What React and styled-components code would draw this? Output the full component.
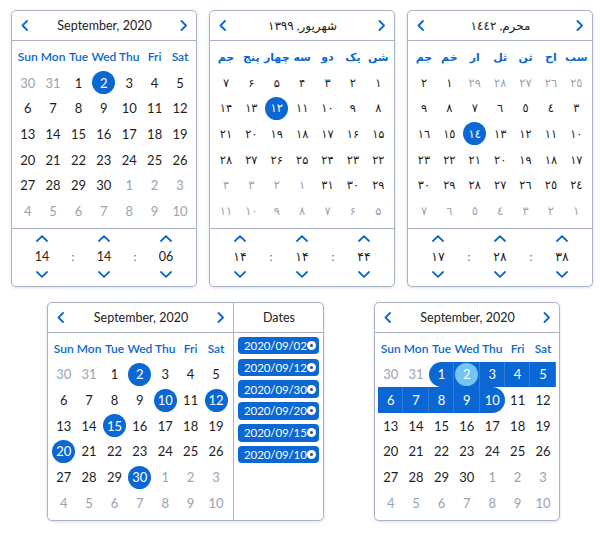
import React from 'react';
import styled, {createGlobalStyle} from 'styled-components';

const BLUE = '#0b67d3';
const FONT = 'Lato, "DejaVu Sans", sans-serif';

const GlobalStyle = createGlobalStyle`
  html, body {
    margin: 0;
    background: #fff;
  }
  body {
    font-family: ${FONT};
    color: #1e1e1e;
  }
`;

const fa = (n) => String(n).replace(/\d/g, (d) => '۰۱۲۳۴۵۶۷۸۹'[d]);
const ar = (n) => String(n).replace(/\d/g, (d) => '٠١٢٣٤٥٦٧٨٩'[d]);

// builds a month grid from [from, to, muted] runs
const build = (runs, fmt = String) => {
  const cells = [];
  runs.forEach(([from, to, muted]) => {
    for (let d = from; d <= to; d++) cells.push({n: d, label: fmt(d), muted: !!muted});
  });
  return cells;
};

const gregorian = build([[30, 31, true], [1, 30], [1, 10, true]]);
const persian = build([[1, 31], [1, 11, true]], fa);
const hijri = build([[25, 29, true], [1, 30], [1, 7, true]], ar);

const EN_DAYS = ['Sun', 'Mon', 'Tue', 'Wed', 'Thu', 'Fri', 'Sat'];
const FA_DAYS = ['شن', 'یک', 'دو', 'سه', 'چهار', 'پنج', 'جم'];
const AR_DAYS = ['سب', 'اح', 'ثن', 'ثل', 'ار', 'خم', 'جم'];

const Chevron = ({dir}) => {
  const d = {
    left: 'M6 1 L1.5 5.5 L6 10',
    right: 'M1.5 1 L6 5.5 L1.5 10',
  }[dir];
  return (
    <svg width="8" height="11" viewBox="0 0 8 11">
      <path d={d} fill="none" stroke={BLUE} strokeWidth="1.8" strokeLinecap="round" strokeLinejoin="round" />
    </svg>
  );
};

const Caret = ({up}) => (
  <svg width="12" height="7" viewBox="0 0 12 7">
    <path
      d={up ? 'M1 6 L6 1.2 L11 6' : 'M1 1 L6 5.8 L11 1'}
      fill="none"
      stroke={BLUE}
      strokeWidth="1.8"
      strokeLinecap="round"
      strokeLinejoin="round"
    />
  </svg>
);

const Page = styled.div`
  width: 600px;
  height: 535px;
  padding-top: 10px;
  box-sizing: border-box;
  display: flex;
  flex-direction: column;
  gap: 15px;
`;

const Row = styled.div`
  display: flex;
  align-items: flex-start;
  gap: ${(p) => p.$gap}px;
  padding-left: ${(p) => p.$left}px;
`;

const Panel = styled.div`
  display: flex;
  background: #fff;
  border: 1px solid #a9b5c7;
  border-radius: 5px;
  box-shadow: 0 1px 3px rgba(60, 80, 110, 0.18);
  overflow: hidden;
`;

const Column = styled.div`
  display: flex;
  flex-direction: column;
  width: ${(p) => p.$width}px;
  border-right: ${(p) => (p.$divided ? '1px solid #a9b5c7' : 'none')};
`;

const Header = styled.div`
  height: 29px;
  display: flex;
  align-items: center;
  justify-content: ${(p) => (p.$center ? 'center' : 'space-between')};
  padding: 0 8px 0 9px;
  border-bottom: 1px solid #a9b5c7;
  font-size: 12.5px;
  color: #222;
`;

const Title = styled.span`
  unicode-bidi: plaintext;
  font-size: ${(p) => (p.$rtl ? '12px' : '12.5px')};
`;

const Grid = styled.div`
  display: grid;
  grid-template-columns: repeat(7, 25.4px);
  grid-auto-rows: 25.7px;
  padding: 3px ${(p) => p.$right}px 4px 3px;
  font-size: ${(p) => (p.dir === 'rtl' ? '11.5px' : '13px')};
`;

const WeekDay = styled.div`
  display: flex;
  align-items: center;
  justify-content: center;
  color: ${BLUE};
  font-weight: 600;
  font-size: ${(p) => (p.$rtl ? '11px' : '12px')};
  white-space: nowrap;
`;

const Cell = styled.div`
  display: flex;
  align-items: center;
  justify-content: center;
  color: ${(p) => (p.$range ? '#fff' : p.$muted ? '#98a4b3' : '#1e1e1e')};
  background: ${(p) => (p.$range ? BLUE : 'transparent')};
  border-radius: ${(p) =>
    p.$range === 'start' ? '13px 0 0 13px' : p.$range === 'end' ? '0 13px 13px 0' : '0'};
  box-shadow: ${(p) =>
    p.$range && p.$range !== 'end' ? 'inset -1px 0 0 rgba(255,255,255,0.16)' : 'none'};
`;

const Mark = styled.span`
  width: 23px;
  height: 23px;
  border-radius: 50%;
  display: flex;
  align-items: center;
  justify-content: center;
  background: ${(p) => (p.$tone === 'light' ? '#72c6f4' : p.$tone ? BLUE : 'transparent')};
  color: ${(p) => (p.$tone ? '#fff' : 'inherit')};
`;

const TimeBar = styled.div`
  display: flex;
  justify-content: center;
  padding: 3px 0 4px;
  border-top: 1px solid #a9b5c7;
`;

const Spinner = styled.div`
  width: 36px;
  display: flex;
  flex-direction: column;
  align-items: center;
`;

const Arrow = styled.div`
  height: 14px;
  display: flex;
  align-items: center;
`;

const TimeValue = styled.div`
  height: 22px;
  display: flex;
  align-items: center;
  font-size: 12.5px;
  color: #222;
`;

const Colon = styled.div`
  width: 26px;
  display: flex;
  align-items: center;
  justify-content: center;
  font-size: 12px;
  color: #666;
`;

const ChipList = styled.div`
  display: flex;
  flex-direction: column;
  gap: 4.3px;
  padding: 4px;
`;

const Chip = styled.div`
  height: 17.5px;
  display: flex;
  align-items: center;
  justify-content: space-between;
  padding: 0 4px 0 6px;
  border-radius: 4px;
  background: ${BLUE};
  color: #fff;
  font-size: 11.5px;
  letter-spacing: -0.1px;
`;

const ChipClose = styled.span`
  flex: none;
  width: 9px;
  height: 9px;
  border-radius: 50%;
  background: #fff;
  display: flex;
  align-items: center;
  justify-content: center;
  &::after {
    content: '';
    width: 3px;
    height: 3px;
    border-radius: 50%;
    background: #3b4a5e;
  }
`;

const DayGrid = ({days, cells, dir = 'ltr', right = 3, marks = {}, range}) => (
  <Grid dir={dir} $right={right}>
    {days.map((d) => (
      <WeekDay key={d} $rtl={dir === 'rtl'}>{d}</WeekDay>
    ))}
    {cells.map((c, i) => {
      const key = c.muted ? null : c.n;
      let r;
      if (range && key && key >= range.from && key <= range.to) {
        r = key === range.from ? 'start' : key === range.to ? 'end' : 'mid';
      }
      return (
        <Cell key={i} $muted={c.muted} $range={r}>
          <Mark $tone={key ? marks[key] : undefined}>{c.label}</Mark>
        </Cell>
      );
    })}
  </Grid>
);

const CalHeader = ({title, rtl}) => (
  <Header>
    <Chevron dir="left" />
    <Title $rtl={rtl}>{title}</Title>
    <Chevron dir="right" />
  </Header>
);

const Time = ({values}) => (
  <TimeBar>
    {values.map((v, i) => (
      <React.Fragment key={i}>
        {i > 0 && <Colon>:</Colon>}
        <Spinner>
          <Arrow>
            <Caret up />
          </Arrow>
          <TimeValue>{v}</TimeValue>
          <Arrow>
            <Caret />
          </Arrow>
        </Spinner>
      </React.Fragment>
    ))}
  </TimeBar>
);

const TimeCalendar = ({title, days, cells, dir, marks, time}) => (
  <Panel>
    <Column $width={184}>
      <CalHeader title={title} rtl={dir === 'rtl'} />
      <DayGrid days={days} cells={cells} dir={dir} marks={marks} />
      <Time values={time} />
    </Column>
  </Panel>
);

const picked = ['2020/09/02', '2020/09/12', '2020/09/30', '2020/09/20', '2020/09/15', '2020/09/10'];

export default function App() {
  return (
    <>
      <GlobalStyle />
      <Page>
        <Row $gap={12} $left={11}>
          <TimeCalendar
            title="September, 2020"
            days={EN_DAYS}
            cells={gregorian}
            marks={{2: true}}
            time={['14', '14', '06']}
          />
          <TimeCalendar
            title={`شهریور, ${fa(1399)}`}
            days={FA_DAYS}
            cells={persian}
            dir="rtl"
            marks={{12: true}}
            time={[fa(14), fa(14), fa(44)]}
          />
          <TimeCalendar
            title={`محرم, ${ar(1442)}`}
            days={AR_DAYS}
            cells={hijri}
            dir="rtl"
            marks={{14: true}}
            time={[ar(17), ar(28), ar(38)]}
          />
        </Row>
        <Row $gap={50} $left={47}>
          <Panel>
            <Column $width={185} $divided>
              <CalHeader title="September, 2020" />
              <DayGrid
                days={EN_DAYS}
                cells={gregorian}
                right={4}
                marks={{2: true, 10: true, 12: true, 15: true, 20: true, 30: true}}
              />
            </Column>
            <Column $width={89}>
              <Header $center>Dates</Header>
              <ChipList>
                {picked.map((d) => (
                  <Chip key={d}>
                    {d}
                    <ChipClose />
                  </Chip>
                ))}
              </ChipList>
            </Column>
          </Panel>
          <Panel>
            <Column $width={184}>
              <CalHeader title="September, 2020" />
              <DayGrid
                days={EN_DAYS}
                cells={gregorian}
                marks={{2: 'light'}}
                range={{from: 1, to: 10}}
              />
            </Column>
          </Panel>
        </Row>
      </Page>
    </>
  );
}
